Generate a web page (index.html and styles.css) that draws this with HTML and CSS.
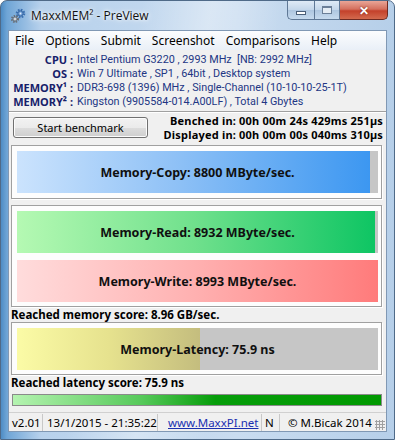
FILE: index.html
```html
<!DOCTYPE html>
<html lang="en">
<head>
    <meta charset="UTF-8">
    <title>MaxxMEM² - PreView</title>
    <link rel="stylesheet" href="styles.css">
</head>
<body>
    <div class="window">
        <div class="titlebar">
            <svg class="app-icon" width="16" height="16" viewBox="0 0 16 16">
                <circle cx="10.5" cy="5.5" r="3.6" fill="none" stroke="#3a6fb0" stroke-width="2.4" stroke-dasharray="1.6 1.2"/>
                <circle cx="10.5" cy="5.5" r="2.6" fill="#6f9fd8" stroke="#2c5a94" stroke-width="0.8"/>
                <circle cx="10.5" cy="5.5" r="0.9" fill="#e8f0fa"/>
                <circle cx="5" cy="11" r="3" fill="none" stroke="#6a7078" stroke-width="2.2" stroke-dasharray="1.4 1.1"/>
                <circle cx="5" cy="11" r="2.1" fill="#b8bec6" stroke="#555c64" stroke-width="0.7"/>
                <circle cx="5" cy="11" r="0.8" fill="#f4f4f4"/>
            </svg>
            <span class="title">MaxxMEM² - PreView</span>
            <div class="controls">
                <div class="ctl ctl-min"><span class="min-glyph"></span></div>
                <div class="ctl ctl-max"><span class="max-glyph"></span></div>
                <div class="ctl ctl-close">✕</div>
            </div>
        </div>

        <div class="client">
            <div class="menubar">
                <span>File</span>
                <span>Options</span>
                <span>Submit</span>
                <span>Screenshot</span>
                <span>Comparisons</span>
                <span>Help</span>
            </div>

            <div class="info">
                <span class="label">CPU :</span>
                <span class="value">Intel Pentium G3220 , 2993 MHz&nbsp; [NB: 2992 MHz]</span>
                <span class="label">OS :</span>
                <span class="value">Win 7 Ultimate , SP1 , 64bit , Desktop system</span>
                <span class="label">MEMORY¹ :</span>
                <span class="value">DDR3-698 (1396) MHz , Single-Channel (10-10-10-25-1T)</span>
                <span class="label">MEMORY² :</span>
                <span class="value">Kingston (9905584-014.A00LF) , Total 4 Gbytes</span>
            </div>

            <div class="bench-row">
                <button class="start-btn">Start benchmark</button>
                <div class="times">
                    <div>Benched in: 00h 00m 24s 429ms 251µs</div>
                    <div>Displayed in: 00h 00m 00s 040ms 310µs</div>
                </div>
            </div>

            <div class="box box-copy">
                <div class="bar">
                    <div class="fill fill-copy" style="width: 97.8%"></div>
                    <div class="bar-label">Memory-Copy: 8800 MByte/sec.</div>
                </div>
            </div>

            <div class="box box-rw">
                <div class="bar">
                    <div class="fill fill-read" style="width: 99.2%"></div>
                    <div class="bar-label">Memory-Read: 8932 MByte/sec.</div>
                </div>
                <div class="bar">
                    <div class="fill fill-write" style="width: 99.9%"></div>
                    <div class="bar-label">Memory-Write: 8993 MByte/sec.</div>
                </div>
            </div>

            <div class="score">Reached memory score: 8.96 GB/sec.</div>

            <div class="box box-lat">
                <div class="bar">
                    <div class="fill fill-lat" style="width: 50.7%"></div>
                    <div class="bar-label">Memory-Latency: 75.9 ns</div>
                </div>
            </div>

            <div class="score">Reached latency score: 75.9 ns</div>

            <div class="progress"></div>

            <div class="statusbar">
                <span class="panel p-ver">v2.01</span>
                <span class="panel p-date">13/1/2015 - 21:35:22</span>
                <span class="panel p-link"><a href="#">www.MaxxPI.net</a></span>
                <span class="panel p-n">N</span>
                <span class="panel p-copy">© M.Bicak 2014</span>
                <span class="grip"></span>
            </div>
        </div>
    </div>
</body>
</html>
```

FILE: styles.css
```css
* {
    box-sizing: border-box;
}
body {
    margin: 0;
    font-family: "Noto Sans", "Open Sans", sans-serif;
    font-size: 11px;
    color: #000;
}

/* window frame */
.window {
    width: 395px;
    height: 440px;
    display: flex;
    flex-direction: column;
    padding: 0 7px 7px;
    border: 1px solid #4f6a88;
    border-radius: 7px 7px 0 0;
    background:
        linear-gradient(100deg, rgba(255,255,255,0) 30%, rgba(255,255,255,0.35) 45%, rgba(255,255,255,0) 60%),
        linear-gradient(to right, #4e8cc4 0, #6fa5d6 6px, #b7d1ec 40px, #c9dcf0 60%, #b6cfe9 100%);
}
.titlebar {
    height: 29px;
    display: flex;
    align-items: flex-start;
}
.app-icon {
    margin: 7px 0 0 2px;
}
.title {
    margin: 6px 0 0 5px;
    font-family: "Open Sans", "Noto Sans", sans-serif;
    font-size: 12px;
    color: #111;
    text-shadow: 0 0 6px #fff, 0 0 3px #fff;
}
.controls {
    margin-left: auto;
    margin-right: -1px;
    display: flex;
}
.ctl {
    height: 19px;
    width: 27px;
    display: flex;
    align-items: center;
    justify-content: center;
    border: 1px solid #5f7896;
    border-top: none;
    background: linear-gradient(#dfeaf6, #c3d6ea 50%, #aec6e0 51%, #c6daee);
}
.ctl-min {
    border-radius: 0 0 0 5px;
    border-right: none;
}
.ctl-max {
    width: 26px;
}
.ctl-close {
    width: 48px;
    border-left: none;
    border-radius: 0 0 5px 0;
    border-color: #6e2a22;
    background: linear-gradient(#e9a597, #d4705e 45%, #c4412b 55%, #d36a4e);
    color: #fff;
    font-size: 12px;
    font-weight: bold;
    text-shadow: 0 0 2px #6b1a10;
}
.min-glyph {
    width: 10px;
    height: 4px;
    margin-top: 6px;
    background: #fff;
    border: 1px solid #4a5e78;
}
.max-glyph {
    width: 10px;
    height: 8px;
    border: 1px solid #6b7f98;
    border-top-width: 2px;
    background: #e4ecf4;
}

/* client area */
.client {
    flex: 1;
    display: flex;
    flex-direction: column;
    background: #f0f0f0;
    border: 1px solid #8098b4;
}
.menubar {
    height: 19px;
    display: flex;
    align-items: center;
    background: linear-gradient(#fcfdfe, #e9eff7);
    font-size: 12px;
}
.menubar span {
    padding: 0 6px;
    margin-right: -1px;
}

.info {
    display: grid;
    grid-template-columns: 64px auto;
    column-gap: 4px;
    padding-top: 3px;
    line-height: 14px;
}
.label {
    text-align: right;
    font-weight: bold;
    color: #16206a;
}
.value {
    font-family: Roboto, "Noto Sans", sans-serif;
    font-size: 10.8px;
    color: #223684;
    white-space: nowrap;
}

.bench-row {
    display: flex;
    justify-content: space-between;
    margin-top: 2px;
    padding: 2px 3px 0 4px;
    border-top: 1px solid #a0a0a0;
    box-shadow: inset 0 1px 0 #fff;
}
.start-btn {
    width: 135px;
    height: 21px;
    margin-top: 3px;
    font-family: "Noto Sans", sans-serif;
    font-size: 11px;
    color: #000;
    border: 1px solid #707070;
    border-radius: 3px;
    background: linear-gradient(#f2f2f2, #ebebeb 50%, #dddddd 51%, #cfcfcf);
    box-shadow: inset 0 0 0 1px #fcfcfc;
}
.times {
    text-align: right;
    font-weight: bold;
    font-size: 11px;
    letter-spacing: 0.2px;
    line-height: 14px;
    padding-bottom: 1px;
    white-space: nowrap;
}

.box {
    margin: 2px 4px 0 2px;
    padding: 5px 3px 5px 5px;
    background: #fdfdfd;
    border: 1px solid #a0a0a0;
    box-shadow: 1px 1px 0 #fff;
    display: flex;
    flex-direction: column;
    gap: 7px;
}
.box-rw {
    margin-top: 6px;
    padding-bottom: 4px;
}
.box-lat {
    margin-top: 0;
    padding-bottom: 4px;
}

.bar {
    display: grid;
    height: 42px;
    background: #c6c6c6;
}
.bar > * {
    grid-area: 1 / 1;
}
.fill {
    height: 100%;
}
.fill-copy {
    background: linear-gradient(to right, #cbe3fd, #8fc1f6 45%, #3c97f1);
}
.fill-read {
    background: linear-gradient(to right, #b5f9b3, #6fe08c 50%, #0ec563);
}
.fill-write {
    background: linear-gradient(to right, #ffdcdc, #ffb0b0 50%, #ff7b7b);
}
.fill-lat {
    background: linear-gradient(to right, #fbfba6, #e6e28e 50%, #c4bd7e);
}
.bar-label {
    align-self: center;
    justify-self: center;
    font-weight: bold;
    font-size: 12.5px;
    color: #101010;
}

.score {
    margin: 1px 0 0 2px;
    line-height: 14px;
    font-size: 11.5px;
    font-weight: bold;
}

.progress {
    height: 12px;
    margin: 4px 4px 0 3px;
    border: 1px solid #8a8a8a;
    background: linear-gradient(to right, #b4f3b0, #56c95a 35%, #069d0a 55%, #009900);
}

.statusbar {
    margin-top: auto;
    height: 19px;
    display: flex;
    align-items: center;
    border-top: 1px solid #d0d0d0;
    font-size: 11.5px;
    white-space: nowrap;
}
.panel {
    flex-shrink: 0;
    padding: 0 0 0 3px;
    border-right: 1px solid #c8c8c8;
    line-height: 17px;
}
.p-ver {
    width: 34px;
}
.p-date {
    width: 115px;
    padding-left: 4px;
}
.p-link {
    width: 104px;
    padding-left: 10px;
}
.p-link a {
    color: #1a2fb0;
}
.p-n {
    width: 18px;
    padding-left: 3px;
}
.p-copy {
    border-right: none;
    padding-left: 8px;
}
.grip {
    margin-left: auto;
    margin-right: 1px;
    width: 10px;
    height: 10px;
    margin-top: 6px;
    background: radial-gradient(circle, #a0a0a0 1px, transparent 1.2px) 0 0 / 3px 3px;
}
```
